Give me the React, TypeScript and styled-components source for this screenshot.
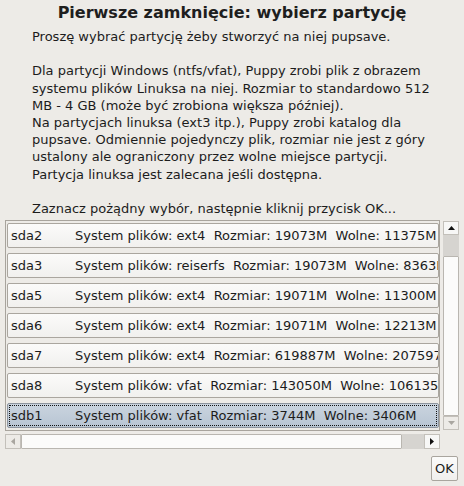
import React from 'react';
import styled, { createGlobalStyle } from 'styled-components';

const Global = createGlobalStyle`
  html, body { margin: 0; padding: 0; background: #edebe7; }
  body { font-family: "DejaVu Sans", "Noto Sans", sans-serif; }
`;

const Window = styled.div`
  width: 464px;
  height: 486px;
  box-sizing: border-box;
  background: #edebe7;
  color: #1c1c1c;
  display: flex;
  flex-direction: column;
  overflow: hidden;
`;

const Title = styled.h1`
  margin: 3px 0 0;
  font-size: 16px;
  line-height: 20px;
  font-weight: bold;
  text-align: center;
  color: #1e1e1e;
`;

const Message = styled.p`
  margin: 5px 0 0 32px;
  font-size: 13px;
  line-height: 17.2px;
  white-space: pre-line;
`;

const ListArea = styled.div`
  display: grid;
  grid-template-columns: 435px 16px;
  grid-template-rows: 211px 16px;
  column-gap: 3px;
  row-gap: 3px;
  margin: 3px 0 0 5px;
`;

const Frame = styled.div`
  box-sizing: border-box;
  border: 1px solid #a8a49d;
  padding: 2px 1px 0 1px;
  display: flex;
  flex-direction: column;
  gap: 5px;
  overflow: hidden;
`;

const Row = styled.div<{ $selected?: boolean }>`
  flex-shrink: 0;
  height: 25px;
  width: 432px;
  box-sizing: border-box;
  border: 1px solid ${p => (p.$selected ? '#8e959e' : '#aaa69f')};
  border-radius: 2px;
  background: ${p =>
    p.$selected
      ? 'linear-gradient(#cad4df, #b8c5d3)'
      : 'linear-gradient(#fbfbfa, #f1f0ee)'};
  display: flex;
  align-items: center;
  padding-left: 3px;
  font-size: 13px;
  white-space: pre;
  overflow: hidden;
  position: relative;
  ${p =>
    p.$selected
      ? `&::after { content: ''; position: absolute; inset: 1px; border: 1px dotted #111; pointer-events: none; }`
      : ''}
`;

const Name = styled.span`
  display: inline-block;
  width: 64px;
  flex-shrink: 0;
`;

const VScroll = styled.div`
  display: flex;
  flex-direction: column;
  box-sizing: border-box;
  padding: 1px 0 1px 0;
`;

const ArrowButton = styled.div<{ $disabled?: boolean }>`
  flex-shrink: 0;
  width: 16px;
  height: 14px;
  box-sizing: border-box;
  border: 1px solid #c3c0ba;
  background: ${p => (p.$disabled ? '#edebe7' : '#f7f7f6')};
  display: flex;
  align-items: center;
  justify-content: center;
`;

const Trough = styled.div<{ $size: number }>`
  flex: 0 0 ${p => p.$size}px;
  background: #d6d4d0;
`;

const VThumb = styled.div`
  flex: 1;
  box-sizing: border-box;
  border: 1px solid #b9b6b0;
  border-radius: 1px;
  background: #fbfbfa;
`;

const HScroll = styled.div`
  display: flex;
  flex-direction: row;
  height: 15px;
`;

const HArrow = styled.div<{ $disabled?: boolean }>`
  flex-shrink: 0;
  width: 16px;
  height: 15px;
  box-sizing: border-box;
  border: 1px solid #c3c0ba;
  background: ${p => (p.$disabled ? '#edebe7' : '#f7f7f6')};
  display: flex;
  align-items: center;
  justify-content: center;
`;

const HThumb = styled.div`
  flex: 1;
  box-sizing: border-box;
  border: 1px solid #b9b6b0;
  border-radius: 1px;
  background: #fbfbfa;
`;

const Footer = styled.div`
  display: flex;
  justify-content: flex-end;
  padding: 6px 6px 0 0;
`;

const OkButton = styled.button`
  width: 27px;
  height: 25px;
  box-sizing: border-box;
  padding: 0;
  border: 1px solid #a9a59e;
  border-radius: 2px;
  background: linear-gradient(#fbfbfa, #f0efed);
  font-family: "DejaVu Sans", sans-serif;
  font-size: 13px;
  color: #1c1c1c;
`;

const Tri: React.FC<{ dir: 'up' | 'down' | 'left' | 'right'; color: string }> = ({ dir, color }) => {
  const pts = {
    up: '0,5 7,5 3.5,1',
    down: '0,1 7,1 3.5,5',
    left: '5,0 5,7 1,3.5',
    right: '1,0 1,7 5,3.5',
  }[dir];
  const vertical = dir === 'up' || dir === 'down';
  return (
    <svg width={vertical ? 7 : 6} height={vertical ? 6 : 7} viewBox={vertical ? '0 0 7 6' : '0 0 6 7'}>
      <polygon points={pts} fill={color} />
    </svg>
  );
};

const partitions = [
  { name: 'sda2', text: 'System plików: ext4  Rozmiar: 19073M  Wolne: 11375M' },
  { name: 'sda3', text: 'System plików: reiserfs  Rozmiar: 19073M  Wolne: 8363M' },
  { name: 'sda5', text: 'System plików: ext4  Rozmiar: 19071M  Wolne: 11300M' },
  { name: 'sda6', text: 'System plików: ext4  Rozmiar: 19071M  Wolne: 12213M' },
  { name: 'sda7', text: 'System plików: ext4  Rozmiar: 619887M  Wolne: 207597M' },
  { name: 'sda8', text: 'System plików: vfat  Rozmiar: 143050M  Wolne: 106135M' },
  { name: 'sdb1', text: 'System plików: vfat  Rozmiar: 3744M  Wolne: 3406M', selected: true },
];

const message = `Proszę wybrać partycję żeby stworzyć na niej pupsave.

Dla partycji Windows (ntfs/vfat), Puppy zrobi plik z obrazem
systemu plików Linuksa na niej. Rozmiar to standardowo 512
MB - 4 GB (może być zrobiona większa później).
Na partycjach linuksa (ext3 itp.), Puppy zrobi katalog dla
pupsave. Odmiennie pojedynczy plik, rozmiar nie jest z góry
ustalony ale ograniczony przez wolne miejsce partycji.
Partycja linuksa jest zalecana jeśli dostępna.

Zaznacz pożądny wybór, następnie kliknij przycisk OK...`;

export default function App() {
  return (
    <Window>
      <Global />
      <Title>Pierwsze zamknięcie: wybierz partycję</Title>
      <Message>{message}</Message>
      <ListArea>
        <Frame>
          {partitions.map(p => (
            <Row key={p.name} $selected={p.selected}>
              <Name>{p.name}</Name>
              {p.text}
            </Row>
          ))}
        </Frame>
        <VScroll>
          <ArrowButton>
            <Tri dir="up" color="#111" />
          </ArrowButton>
          <Trough $size={21} />
          <VThumb />
          <ArrowButton $disabled>
            <Tri dir="down" color="#a9a6a0" />
          </ArrowButton>
        </VScroll>
        <HScroll>
          <HArrow $disabled>
            <Tri dir="left" color="#a9a6a0" />
          </HArrow>
          <HThumb />
          <Trough $size={22} />
          <HArrow>
            <Tri dir="right" color="#111" />
          </HArrow>
        </HScroll>
      </ListArea>
      <Footer>
        <OkButton>OK</OkButton>
      </Footer>
    </Window>
  );
}
